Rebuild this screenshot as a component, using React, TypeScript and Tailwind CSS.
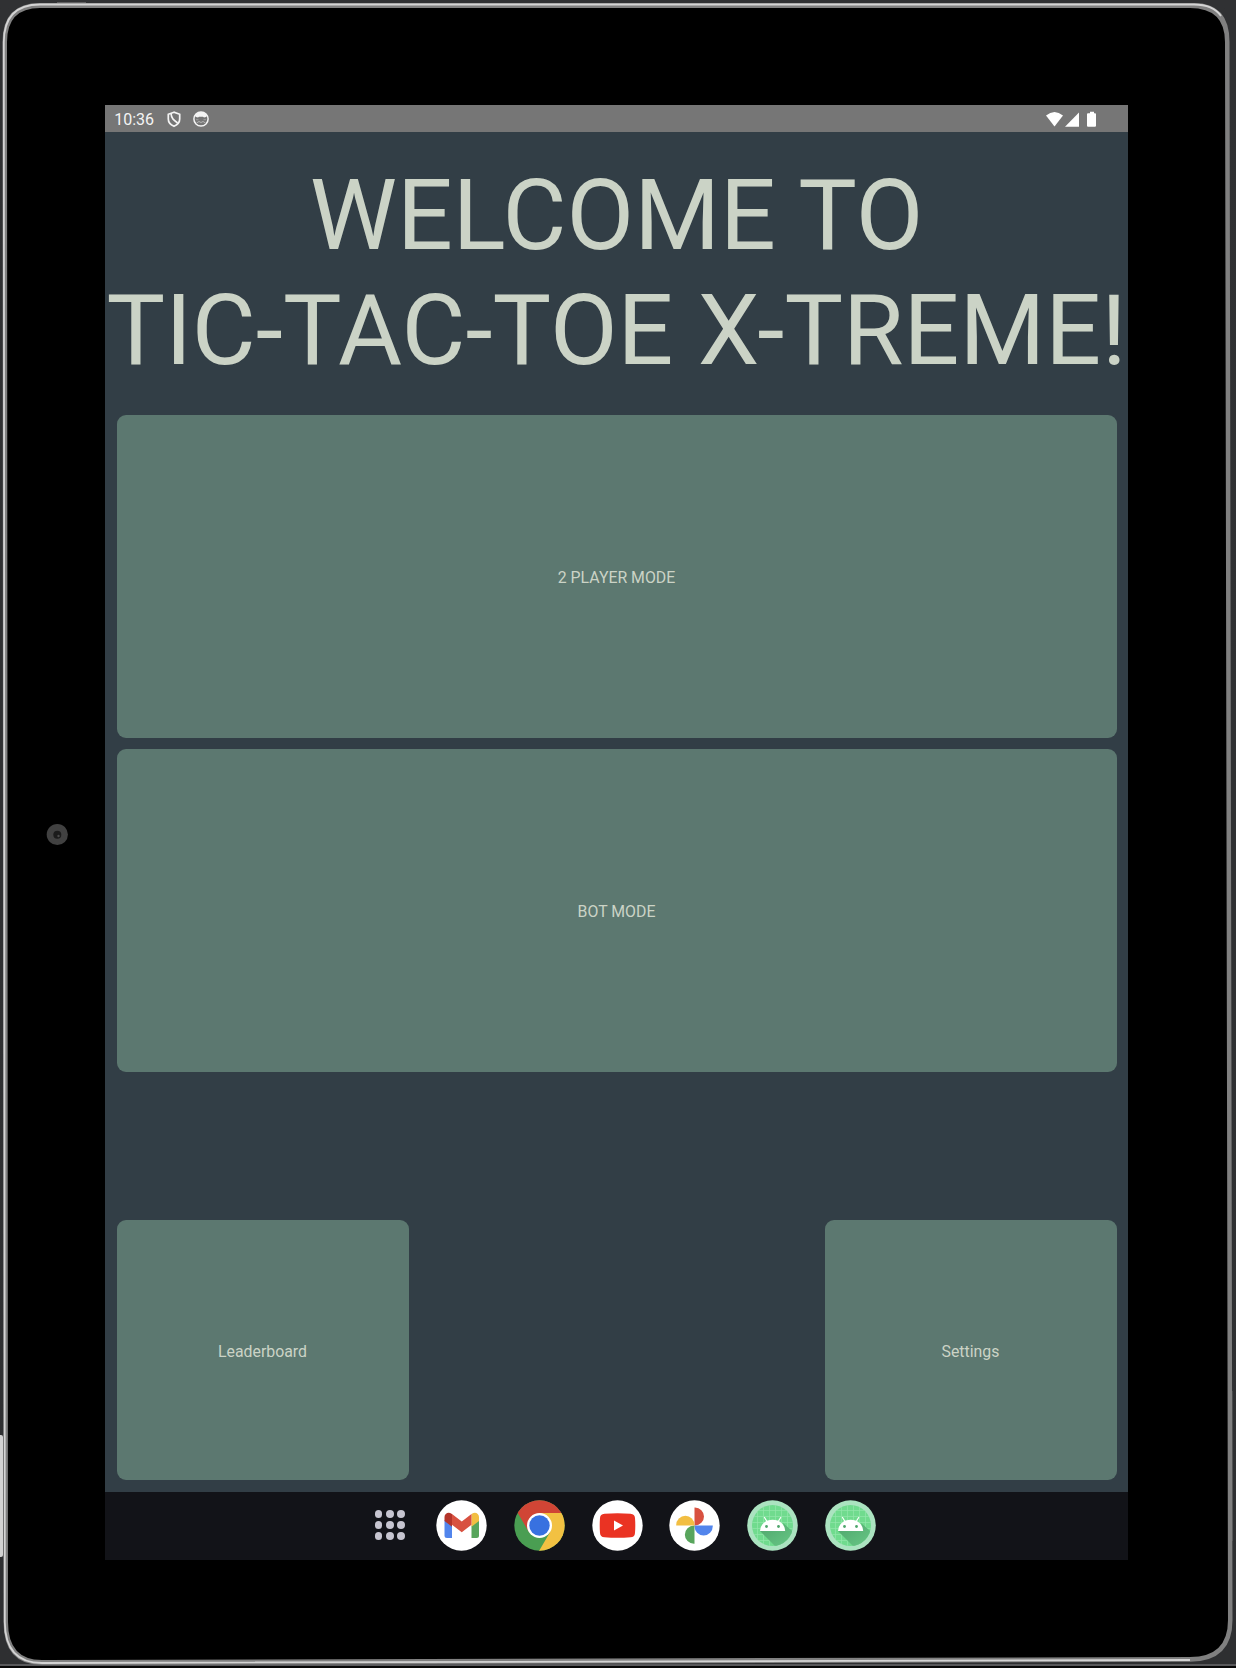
import React from "react";

const Tile = ({ label, className }: { label: string; className: string }) => (
  <button
    className={`flex items-center justify-center rounded-[9px] bg-[#5c7870] text-[15.850px] text-[#cbd3c6] ${className}`}
  >
    {label}
  </button>
);

const Bezel = () => (
  <svg className="absolute inset-0" width="1236" height="1668" viewBox="0 0 1236 1668" fill="none">
    <defs>
      <linearGradient id="bg" x1="0" y1="0" x2="0" y2="1">
        <stop offset="0" stopColor="#303133" />
        <stop offset="1" stopColor="#2e2f31" />
      </linearGradient>
    </defs>
    <rect width="1236" height="1668" fill="url(#bg)" />
    <rect y="1664" width="1236" height="2" fill="#59595b" />
    <rect y="1666" width="1236" height="2" fill="#080808" />
    <rect x="57" y="2" width="29" height="2" fill="#5f5f60" />
    <rect x="-3" y="1435" width="6" height="122" rx="2" fill="#d2d2d2" />
    <rect x="1231" y="1391" width="2" height="150" fill="#454647" />
    <path
      d="M40 3 H1194 Q1229.500 3 1229.500 42 L1232.500 1620 Q1232.500 1661.500 1190 1661.800 L42 1665 Q3.500 1665 3.500 1622 L2.500 42 Q2.500 3 40 3Z"
      fill="#808080"
    />
    <path
      d="M1190 1660 L42 1663 Q5 1663 4.800 1622 L3.800 42 Q4 4.500 40 4.500 H1194 Q1213 4.500 1221 16"
      stroke="#d4d4d4"
      strokeWidth="1.800"
    />
    <path
      d="M40 8 H1190 Q1225 8 1225 42 L1228 1620 Q1228 1657 1190 1657 L42 1660 Q8 1660 8 1622 L7 42 Q7 8 40 8Z"
      fill="#000"
    />
    <circle cx="57.300" cy="834.500" r="10.600" fill="#414141" />
    <circle cx="57.300" cy="834.700" r="4" fill="#1b1b1b" />
    <circle cx="58.500" cy="836" r="1.200" fill="#4a4a4a" />
  </svg>
);

const ShieldIcon = () => (
  <svg width="14" height="17" viewBox="0 0 14 17" fill="none" stroke="#f4f4f4" strokeWidth="1.700">
    <path d="M7 1.200 1.300 3.300v4.600c0 3.200 2.400 5.900 5.700 7.400 3.300-1.500 5.700-4.200 5.700-7.400V3.300Z" />
    <path d="M4 2.500C4.500 7.500 6.500 9 10.600 12" />
  </svg>
);

const CatIcon = () => (
  <svg width="16" height="16" viewBox="0 0 16 16">
    <circle cx="8" cy="8" r="7.100" fill="#767676" stroke="#f4f4f4" strokeWidth="1.500" />
    <path d="M1 7A7.100 7.100 0 0 1 15 7L13 5v1L11 6.500 10 5.800H6L5 6.500 3 6V5Z" fill="#f4f4f4" />
    <path d="M3.500 12 6 10.500 8 11.500 10 10.500 12.500 12" stroke="#b5b5b5" strokeWidth="1" fill="none" />
    <path d="M3 8.700h2.500M10.500 8.700H13" stroke="#a0a0a0" strokeWidth="1" />
  </svg>
);

const StatusBar = () => (
  <header className="flex h-[27px] shrink-0 items-center bg-[#767676] pl-[9.200px] pr-[31.500px] text-[16px] text-[#f4f4f4]">
    <span className="mt-[2px] mr-[13px] w-[40px] whitespace-nowrap leading-none">10:36</span>
    <div className="mt-px flex items-center gap-[12px]">
      <ShieldIcon />
      <CatIcon />
    </div>
    <svg className="mt-px ml-auto" width="51" height="17" viewBox="0 0 51 17" fill="#fff">
      <path d="M0 4.500Q8.500-2.600 17 4.500L8.500 15.500Z" />
      <path d="M19 15.700 33 1.500V15.700Z" />
      <path d="M42 2.200h2V.800h4v1.400h1a1 1 0 0 1 1 1V14.700a1 1 0 0 1-1 1h-7a1 1 0 0 1-1-1V3.200a1 1 0 0 1 1-1Z" />
    </svg>
  </header>
);

const Gmail = () => (
  <svg width="51" height="51" viewBox="0 0 51 51">
    <circle cx="25.500" cy="25.500" r="25.200" fill="#fff" />
    <path d="M8.500 20l7.500 5.700V38h-5a2.500 2.500 0 0 1-2.500-2.500Z" fill="#5285ec" />
    <path d="M43 20l-7.500 5.700V38h5a2.500 2.500 0 0 0 2.500-2.500Z" fill="#58a55c" />
    <path d="M8.500 21v-4c0-4 4.300-5.500 7-3.300l.500.400v12.600Z" fill="#b4352b" />
    <path d="M43 21v-4c0-4-4.300-5.500-7-3.300l-.500.400v12.600Z" fill="#f2be42" />
    <path d="M16 14.100l9.750 7.500 9.750-7.500v10.600l-9.750 7.500L16 24.700Z" fill="#d85140" />
  </svg>
);

const Chrome = () => (
  <svg width="51" height="51" viewBox="0 0 51 51">
    <defs>
      <clipPath id="chrome"><circle cx="25.500" cy="25.500" r="25.200" /></clipPath>
    </defs>
    <g clipPath="url(#chrome)">
      <rect width="51" height="51" fill="#4a9e52" />
      <path d="M25.500 13H51V51H25L36.300 31.700Z" fill="#f2c142" />
      <path d="M-2 10V-2H53V13H25.500L14.700 31.700 3.600 12.700Z" fill="#d04535" />
    </g>
    <circle cx="25.500" cy="25.500" r="12.500" fill="#fff" />
    <circle cx="25.500" cy="25.500" r="10.200" fill="#3871e0" />
  </svg>
);

const YouTube = () => (
  <svg width="51" height="51" viewBox="0 0 51 51">
    <circle cx="25.500" cy="25.500" r="25.200" fill="#fff" />
    <path d="M12.500 13.700Q25.500 12.700 38.500 13.700C41.500 14 42.800 15.500 43 18Q43.600 25.500 43 33C42.800 36 41.300 37 38.500 37.300Q25.500 38.300 12.500 37.300C9.500 37 8.200 35.800 8 33Q7.400 25.500 8 18C8.200 15.500 9.500 14 12.500 13.700Z" fill="#ea3323" />
    <path d="M22 20.500 31 25.500 22 30.500Z" fill="#fff" />
  </svg>
);

const Photos = () => (
  <svg width="51" height="51" viewBox="0 0 51 51">
    <circle cx="25.500" cy="25.500" r="25.200" fill="#fff" />
    <path d="M25.500 7.500H26a9 9 0 0 1 0 18H25.500Z" fill="#d85140" />
    <path d="M43.800 25.500V26a9.150 9.500 0 0 1-18.300 0V25.500Z" fill="#5285ec" />
    <path d="M25.500 43.800H25a9.150 9.150 0 0 1 0-18.300H25.500Z" fill="#58a55c" />
    <path d="M7.200 25.500V25a9.150 9.300 0 0 1 18.300 0V25.500Z" fill="#f2be42" />
  </svg>
);

const AndroidApp = ({ id }: { id: string }) => (
  <svg width="51" height="51" viewBox="0 0 51 51">
    <defs>
      <clipPath id={id}><circle cx="25.500" cy="25.500" r="20.500" /></clipPath>
      <linearGradient id={`${id}-shade`} x1="0" y1="0" x2="1" y2="1">
        <stop offset="0" stopColor="#4fa56c" />
        <stop offset="1" stopColor="#6bcc89" />
      </linearGradient>
    </defs>
    <circle cx="25.500" cy="25.500" r="25.300" fill="#abe3c0" />
    <g clipPath={`url(#${id})`}>
      <rect width="51" height="51" fill="#70db8e" />
      <path
        d="M10.500 0V51M16.500 0V51M22.500 0V51M28.500 0V51M34.500 0V51M40.500 0V51M0 10.500H51M0 16.500H51M0 22.500H51M0 28.500H51M0 34.500H51M0 40.500H51"
        stroke="#92e6aa"
        strokeWidth=".7"
      />
      <path d="M13 31 31 49 51 36 36 23 38 31Z" fill={`url(#${id}-shade)`} />
    </g>
    <path d="M13 31a12.600 11.300 0 0 1 25.200 0Z" fill="#fff" />
    <path d="M17.500 17.500 20 21.500M33.700 17.500 31.200 21.500" stroke="#fff" strokeWidth="1.200" strokeLinecap="round" />
    <circle cx="19.500" cy="26.500" r="1.400" fill="#4fa56c" />
    <circle cx="31.500" cy="26.500" r="1.400" fill="#4fa56c" />
  </svg>
);

const Dock = () => (
  <nav className="flex h-[68px] shrink-0 items-center gap-[26.900px] bg-[#121318] pl-[269.700px] pb-[2px]">
    <div className="mr-[3.800px] grid grid-cols-3 gap-[3.500px]">
      {Array.from({ length: 9 }, (_, i) => (
        <span key={i} className="size-[7.800px] rounded-full bg-[#c6c5d0]" />
      ))}
    </div>
    <Gmail />
    <Chrome />
    <YouTube />
    <Photos />
    <AndroidApp id="app-one" />
    <AndroidApp id="app-two" />
  </nav>
);

export default function App() {
  return (
    <div className="relative h-[1668px] w-[1236px] overflow-hidden pt-[105px] pl-[105px] font-[Roboto,sans-serif]">
      <Bezel />
      <div className="relative flex h-[1455px] w-[1023px] flex-col bg-[#323e46]">
        <StatusBar />
        <main className="flex flex-1 flex-col px-[11.500px] pb-[12px]">
          <h1 className="-mx-[11.500px] mt-[26px] h-[257.300px] whitespace-nowrap text-center text-[98.300px] leading-[115px] text-[#cbd3c6]">
            WELCOME TO
            <br />
            TIC-TAC-TOE X-TREME!
          </h1>
          <Tile label="2 PLAYER MODE" className="h-[322.500px] pt-[2px]" />
          <Tile label="BOT MODE" className="mt-[11.700px] h-[322.500px] pt-[2px]" />
          <div className="mt-auto flex justify-between">
            <Tile label="Leaderboard" className="h-[260px] w-[292px] pt-[3px]" />
            <Tile label="Settings" className="h-[260px] w-[292px] pt-[3px]" />
          </div>
        </main>
        <Dock />
      </div>
    </div>
  );
}
